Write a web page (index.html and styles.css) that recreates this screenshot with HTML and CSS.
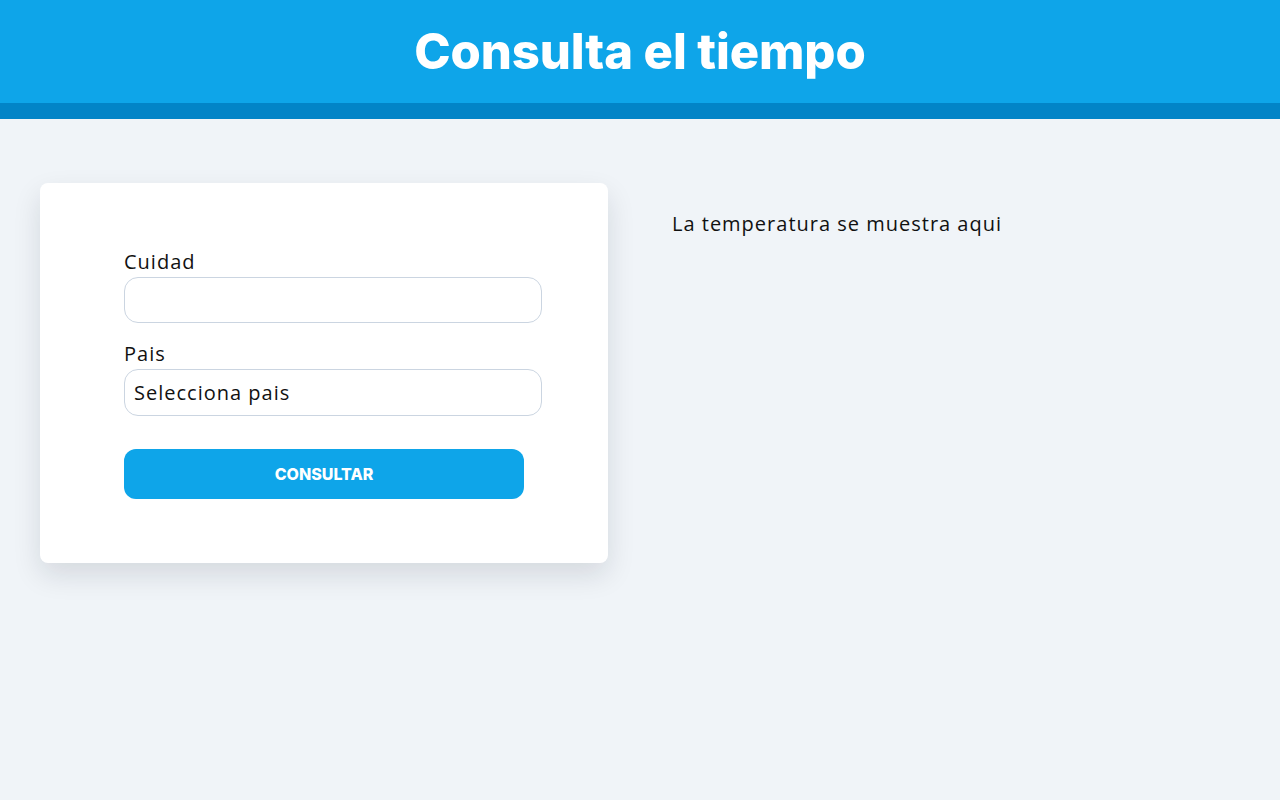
FILE: index.html
```html
<!DOCTYPE html>
<html lang="es">
<head>
<meta charset="utf-8">
<title>Consulta el tiempo</title>
<link rel="stylesheet" href="styles.css">
</head>
<body>
<header class="header">
  <h1 class="title">Consulta el tiempo</h1>
</header>
<main class="main">
  <section class="card">
    <form class="form">
      <label class="label" for="ciudad">Cuidad</label>
      <input class="input" id="ciudad" type="text">
      <label class="label label-second" for="pais">Pais</label>
      <div class="select" id="pais">Selecciona pais</div>
      <button class="button" type="button">Consultar</button>
    </form>
  </section>
  <section class="result">
    <p class="result-text">La temperatura se muestra aqui</p>
  </section>
</main>
</body>
</html>
```
FILE: styles.css
```css
* { box-sizing: border-box; }
html, body { margin: 0; padding: 0; }
body {
  background: #f0f4f8;
  font-family: "Open Sans", "Noto Sans", sans-serif;
  font-weight: 400;
  color: #111;
  min-height: 800px;
}
.header {
  background: #0ea5e9;
  border-bottom: 16px solid #0284c7;
  height: 119px;
  display: flex;
  align-items: center;
  justify-content: center;
}
.title {
  margin: 0;
  color: #fff;
  font-family: Inter, "Noto Sans", sans-serif;
  font-weight: 800;
  font-size: 49px;
  line-height: 1;
  letter-spacing: -0.1px;
}
.main {
  display: grid;
  grid-template-columns: 568px 1fr;
  column-gap: 64px;
  padding: 64px 40px;
  align-items: start;
}
.card {
  background: #fff;
  border-radius: 8px;
  box-shadow: 0 12px 28px rgba(15, 23, 42, 0.12);
  padding: 64px 66px 64px 84px;
}
.form {
  display: flex;
  flex-direction: column;
  align-items: flex-start;
}
.label {
  font-size: 20px;
  line-height: 30px;
  letter-spacing: 1px;
  color: #111;
}
.label-second { margin-top: 16px; }
.input, .select {
  width: 418px;
  height: 46px;
  border: 1px solid #cbd5e1;
  border-radius: 14px;
  background: #fff;
  font-family: inherit;
  font-weight: 400;
  font-size: 20px;
  letter-spacing: 1px;
  padding: 0 9px;
  color: #111;
}
.select {
  display: flex;
  align-items: center;
  height: 47px;
}
.button {
  margin-top: 33px;
  width: 400px;
  height: 50px;
  border: none;
  border-radius: 12px;
  background: #0ea5e9;
  color: #fff;
  font-family: Inter, "Noto Sans", sans-serif;
  font-weight: 800;
  font-size: 16px;
  text-transform: uppercase;
  cursor: pointer;
}
.result-text {
  margin: 29px 0 0;
  font-size: 20px;
  line-height: 24px;
  letter-spacing: 1px;
}
```
